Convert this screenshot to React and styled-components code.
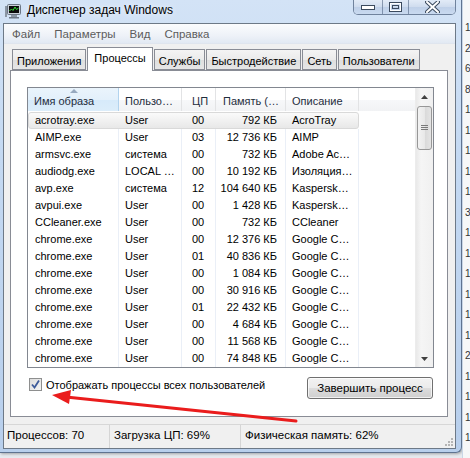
import React from "react";
import styled, { createGlobalStyle } from "styled-components";

const GlobalStyle = createGlobalStyle`
  html, body { margin: 0; padding: 0; }
  body {
    width: 470px;
    height: 458px;
    overflow: hidden;
    background: #e6eaef;
    font-family: "Liberation Sans", Arial, sans-serif;
    font-size: 11px;
    color: #000;
  }
`;

const Screen = styled.div`
  position: relative;
  width: 470px;
  height: 458px;
  display: flex;
  align-items: flex-start;
  overflow: hidden;
`;

const Window = styled.div`
  width: 461px;
  height: 452px;
  flex: none;
  display: flex;
  flex-direction: column;
  background: linear-gradient(180deg, #d3e3f6 0%, #c4d9f2 35%, #b8cfec 100%);
  border-right: 1px solid #5f7390;
  border-bottom: 1px solid #5f7390;
  border-bottom-right-radius: 6px;
  box-shadow: 1px 1px 3px rgba(0, 0, 0, 0.3);
`;

const TitleBar = styled.div`
  height: 23px;
  flex: none;
  display: flex;
  align-items: flex-start;
`;

const TitleIcon = styled.svg`
  margin: 4px 0 0 5px;
  flex: none;
`;

const TitleText = styled.div`
  margin-left: 6px;
  line-height: 21px;
  font-size: 12px;
  color: #000;
  text-shadow: 0 0 6px rgba(255, 255, 255, 0.9);
`;

const WinButtons = styled.div`
  margin-left: auto;
  margin-right: 5px;
  height: 14px;
  display: flex;
  border: 1px solid rgba(70, 90, 120, 0.7);
  border-top: none;
  border-radius: 0 0 5px 5px;
  overflow: hidden;
  box-shadow: inset 0 0 0 1px rgba(255, 255, 255, 0.5);
`;

const WinButton = styled.div`
  width: ${(p) => p.$w}px;
  display: flex;
  align-items: center;
  justify-content: center;
  background: linear-gradient(180deg, #e2ebf7 0%, #cfdcee 50%, #bfd0e8 51%, #c9daf0 100%);
  & + & {
    border-left: 1px solid rgba(70, 90, 120, 0.55);
  }
`;

const Client = styled.div`
  flex: 1;
  margin: 0 5px 3px 3px;
  border: 1px solid #6d7987;
  background: #f0f0f0;
  display: flex;
  flex-direction: column;
  min-height: 0;
`;

const MenuBar = styled.div`
  height: 20px;
  flex: none;
  display: flex;
  align-items: center;
  padding-left: 8px;
  gap: 14px;
  background: linear-gradient(180deg, #fbfcfe 0%, #eef2f8 60%, #e2e9f3 100%);
  border-bottom: 1px solid #dfe5ee;
  box-sizing: border-box;
`;

const MenuItem = styled.span`
  color: #5c5c5c;
  font-size: 11.5px;
`;

const Body = styled.div`
  flex: 1;
  display: flex;
  flex-direction: column;
  padding: 3px 7px 7px 6px;
  min-height: 0;
`;

const TabRow = styled.div`
  height: 23px;
  flex: none;
  display: flex;
  align-items: flex-end;
  padding-left: 2px;
  position: relative;
  z-index: 1;
`;

const Tab = styled.div`
  height: ${(p) => (p.$active ? 24 : 21)}px;
  margin-bottom: ${(p) => (p.$active ? -1 : 0)}px;
  box-sizing: border-box;
  padding: ${(p) => (p.$active ? "3px 6px 0" : "4px 4px 0")};
  margin-right: 1px;
  border: 1px solid #898c95;
  border-bottom: ${(p) => (p.$active ? "none" : "1px solid #898c95")};
  background: ${(p) =>
    p.$active ? "#fff" : "linear-gradient(180deg, #f4f4f4 0%, #ebebeb 50%, #dedede 51%, #e6e6e6 100%)"};
  white-space: nowrap;
  line-height: 14px;
`;

const Panel = styled.div`
  flex: 1;
  border: 1px solid #898c95;
  background: #fff;
  padding: 16px 13px 0 16px;
  display: flex;
  flex-direction: column;
  min-height: 0;
`;

const ListView = styled.div`
  height: 279px;
  flex: none;
  border: 1px solid #828790;
  display: flex;
  overflow: hidden;
`;

const ListMain = styled.div`
  flex: 1;
  display: flex;
  flex-direction: column;
  overflow: hidden;
`;

const COLS = "91px 63px 34px 70px 73px 1fr";

const HeaderRow = styled.div`
  height: 23px;
  flex: none;
  display: grid;
  grid-template-columns: ${COLS};
  background: linear-gradient(180deg, #ffffff 0%, #ffffff 50%, #f7f8fa 51%, #f1f2f4 100%);
`;

const HeaderCell = styled.div`
  position: relative;
  box-sizing: border-box;
  padding: 6px 0 0 ${(p) => p.$pl || 6}px;
  color: #1f2d3d;
  line-height: 14px;
  white-space: nowrap;
  overflow: hidden;
  border-right: 1px solid ${(p) => (p.$sorted ? "#b2d3ee" : "#e2e3e5")};
  background: ${(p) =>
    p.$sorted ? "linear-gradient(180deg, #eaf4fc 0%, #e3f0fb 50%, #d6eafa 51%, #dcedfa 100%)" : "transparent"};
  &::before {
    content: "";
    display: ${(p) => (p.$sorted ? "block" : "none")};
    position: absolute;
    top: 1px;
    left: 42px;
    border-left: 4px solid transparent;
    border-right: 4px solid transparent;
    border-bottom: 4px solid #97a9bf;
  }
  &:last-child {
    border-right: none;
  }
`;

const Rows = styled.div`
  flex: 1;
  padding-top: 1px;
`;

const Row = styled.div`
  height: 17px;
  display: grid;
  grid-template-columns: ${COLS};
  position: relative;
  &::after {
    content: "";
    display: ${(p) => (p.$selected ? "block" : "none")};
    position: absolute;
    left: 0;
    top: 0;
    width: 331px;
    height: 17px;
    box-sizing: border-box;
    border: 1px solid #d9d9d9;
    border-radius: 3px;
    background: linear-gradient(180deg, #fafafa 0%, #e8e8e8 100%);
    z-index: 0;
  }
`;

const Cell = styled.div`
  position: relative;
  z-index: 1;
  box-sizing: border-box;
  line-height: 17px;
  white-space: nowrap;
  overflow: hidden;
  padding: 0 ${(p) => (p.$right ? "8px" : "0")} 0 ${(p) => (p.$right ? "0" : `${p.$pl || 7}px`)};
  text-align: ${(p) => (p.$right ? "right" : "left")};
  border-right: 1px solid ${(p) => (p.$selected ? "transparent" : "#eaeff7")};
  &:last-child {
    border-right: none;
  }
`;

const ScrollBar = styled.div`
  width: 17px;
  flex: none;
  display: flex;
  flex-direction: column;
  background: linear-gradient(90deg, #e9e9e9 0%, #f5f5f5 30%, #f0f0f0 100%);
  border-left: 1px solid #ececec;
`;

const ScrollArrow = styled.div`
  height: 17px;
  flex: none;
  display: flex;
  align-items: center;
  justify-content: center;
`;

const ScrollTrack = styled.div`
  flex: 1;
  padding: 1px 0;
`;

const Thumb = styled.div`
  height: 44px;
  margin: 0 1px;
  box-sizing: border-box;
  border: 1px solid #979797;
  border-radius: 3px;
  background: linear-gradient(90deg, #f3f3f3 0%, #e8e8e8 50%, #d9d9d9 51%, #e4e4e4 100%);
  display: flex;
  align-items: center;
  justify-content: center;
`;

const BottomRow = styled.div`
  margin-top: 9px;
  display: flex;
  align-items: center;
  justify-content: space-between;
  padding: 0 1px 0 2px;
`;

const CheckLabel = styled.label`
  display: flex;
  align-items: center;
  gap: 4px;
  margin-top: -7px;
  line-height: 14px;
`;

const CheckBox = styled.span`
  width: 13px;
  height: 13px;
  box-sizing: border-box;
  border: 1px solid #8e8f8f;
  background: linear-gradient(135deg, #dcdcdc 0%, #f4f4f4 100%);
  display: flex;
  align-items: center;
  justify-content: center;
`;

const Button = styled.div`
  width: 126px;
  height: 22px;
  box-sizing: border-box;
  border: 1px solid #707070;
  border-radius: 3px;
  background: linear-gradient(180deg, #f2f2f2 0%, #ebebeb 50%, #dddddd 51%, #cfcfcf 100%);
  box-shadow: inset 0 0 0 1px rgba(255, 255, 255, 0.7);
  display: flex;
  align-items: center;
  justify-content: center;
  line-height: 14px;
  font-size: 11.5px;
`;

const StatusBar = styled.div`
  height: 24px;
  flex: none;
  box-sizing: border-box;
  border-top: 1px solid #d7d7d7;
  display: flex;
  position: relative;
`;

const StatusCell = styled.div`
  width: ${(p) => (p.$w ? `${p.$w}px` : "auto")};
  flex: ${(p) => (p.$w ? "none" : 1)};
  box-sizing: border-box;
  padding-left: ${(p) => p.$pl}px;
  line-height: 21px;
  font-size: 11.5px;
  border-right: ${(p) => (p.$w ? "1px solid #d5d5d5" : "none")};
  white-space: nowrap;
`;

const Grip = styled.svg`
  position: absolute;
  right: 2px;
  bottom: 2px;
`;

const DesktopStrip = styled.div`
  flex: 1;
  height: 458px;
  display: flex;
  flex-direction: column;
  padding: 18px 0 0 2px;
  background: #f6f7f8;
  border-left: 1px solid #c9d6e6;
  color: #333;
  font-size: 10px;
  line-height: 20.5px;
  overflow: hidden;
`;

const Overlay = styled.svg`
  position: absolute;
  left: 0;
  top: 0;
  pointer-events: none;
`;

const rows = [
  ["acrotray.exe", "User", "00", "792 КБ", "AcroTray"],
  ["AIMP.exe", "User", "03", "12 736 КБ", "AIMP"],
  ["armsvc.exe", "система", "00", "732 КБ", "Adobe Ac…"],
  ["audiodg.exe", "LOCAL …", "00", "10 192 КБ", "Изоляция…"],
  ["avp.exe", "система", "12", "104 640 КБ", "Kaspersk…"],
  ["avpui.exe", "User", "00", "1 428 КБ", "Kaspersk…"],
  ["CCleaner.exe", "User", "00", "732 КБ", "CCleaner"],
  ["chrome.exe", "User", "00", "12 376 КБ", "Google C…"],
  ["chrome.exe", "User", "01", "40 836 КБ", "Google C…"],
  ["chrome.exe", "User", "00", "1 084 КБ", "Google C…"],
  ["chrome.exe", "User", "00", "30 916 КБ", "Google C…"],
  ["chrome.exe", "User", "01", "22 432 КБ", "Google C…"],
  ["chrome.exe", "User", "00", "4 684 КБ", "Google C…"],
  ["chrome.exe", "User", "00", "11 568 КБ", "Google C…"],
  ["chrome.exe", "User", "00", "74 848 КБ", "Google C…"],
];

const tabs = ["Приложения", "Процессы", "Службы", "Быстродействие", "Сеть", "Пользователи"];
const menus = ["Файл", "Параметры", "Вид", "Справка"];
const desktopDigits = ["1", "2", "6", "8", "1", "1", "1", "1", "1", "3", "1", "1", "1", "1", "1", "1", "2", "1", "1", "1", "1"];

const AppIcon = () => (
  <TitleIcon width="16" height="15" viewBox="0 0 16 15">
    <rect x="0" y="2" width="2" height="11" fill="#8a96a4" />
    <rect x="2.5" y="0.5" width="13" height="10" rx="1" fill="#c9d1da" stroke="#6b7684" />
    <rect x="4" y="2" width="10" height="7" fill="#0c0c0c" />
    <polyline points="4.5,7 6.5,5 8,6.5 10,3 11.5,5.5 13.5,4" fill="none" stroke="#38e038" strokeWidth="1" />
    <rect x="6" y="11" width="6" height="2" fill="#8a96a4" />
    <rect x="4" y="13" width="10" height="1.5" fill="#6b7684" />
  </TitleIcon>
);

export default function App() {
  return (
    <>
      <GlobalStyle />
      <Screen>
        <Window>
          <TitleBar>
            <AppIcon />
            <TitleText>Диспетчер задач Windows</TitleText>
            <WinButtons>
              <WinButton $w={28}>
                <svg width="14" height="5" viewBox="0 0 14 5">
                  <rect x="0.5" y="0.5" width="13" height="4" fill="#fff" stroke="#3b4a5e" />
                </svg>
              </WinButton>
              <WinButton $w={25}>
                <svg width="13" height="10" viewBox="0 0 13 10">
                  <rect x="0.5" y="0.5" width="12" height="9" fill="none" stroke="#3b4a5e" />
                  <rect x="1.5" y="1.5" width="10" height="7" fill="none" stroke="#fff" />
                  <rect x="3.5" y="3.5" width="6" height="3" fill="none" stroke="#3b4a5e" />
                </svg>
              </WinButton>
              <WinButton $w={46}>
                <svg width="15" height="12" viewBox="0 0 15 12">
                  <path d="M2 1 L13 11 M13 1 L2 11" stroke="#3b4a5e" strokeWidth="4" strokeLinecap="round" />
                  <path d="M2 1 L13 11 M13 1 L2 11" stroke="#fff" strokeWidth="2" strokeLinecap="round" />
                </svg>
              </WinButton>
            </WinButtons>
          </TitleBar>

          <Client>
            <MenuBar>
              {menus.map((m) => (
                <MenuItem key={m}>{m}</MenuItem>
              ))}
            </MenuBar>

            <Body>
              <TabRow>
                {tabs.map((t) => (
                  <Tab key={t} $active={t === "Процессы"}>
                    {t}
                  </Tab>
                ))}
              </TabRow>

              <Panel>
                <ListView>
                  <ListMain>
                    <HeaderRow>
                      <HeaderCell $sorted>Имя образа</HeaderCell>
                      <HeaderCell>Пользо…</HeaderCell>
                      <HeaderCell $pl={10}>ЦП</HeaderCell>
                      <HeaderCell $pl={7}>Память (…</HeaderCell>
                      <HeaderCell>Описание</HeaderCell>
                      <HeaderCell />
                    </HeaderRow>
                    <Rows>
                      {rows.map((r, i) => {
                        const sel = i === 0;
                        return (
                          <Row key={i} $selected={sel}>
                            <Cell $selected={sel}>{r[0]}</Cell>
                            <Cell $selected={sel} $pl={6}>
                              {r[1]}
                            </Cell>
                            <Cell $selected={sel} $pl={10}>
                              {r[2]}
                            </Cell>
                            <Cell $selected={sel} $right>
                              {r[3]}
                            </Cell>
                            <Cell $selected={sel} $pl={6}>
                              {r[4]}
                            </Cell>
                            <Cell />
                          </Row>
                        );
                      })}
                    </Rows>
                  </ListMain>
                  <ScrollBar>
                    <ScrollArrow>
                      <svg width="7" height="4" viewBox="0 0 7 4">
                        <path d="M0 4 L3.5 0 L7 4 Z" fill="#404040" />
                      </svg>
                    </ScrollArrow>
                    <ScrollTrack>
                      <Thumb>
                        <svg width="7" height="6" viewBox="0 0 7 6">
                          <path d="M0 0.5 H7 M0 2.5 H7 M0 4.5 H7" stroke="#7a7a7a" strokeWidth="1" />
                        </svg>
                      </Thumb>
                    </ScrollTrack>
                    <ScrollArrow>
                      <svg width="7" height="4" viewBox="0 0 7 4">
                        <path d="M0 0 L3.5 4 L7 0 Z" fill="#404040" />
                      </svg>
                    </ScrollArrow>
                  </ScrollBar>
                </ListView>

                <BottomRow>
                  <CheckLabel>
                    <CheckBox>
                      <svg width="9" height="9" viewBox="0 0 9 9">
                        <path d="M1 4.5 L3.5 7.5 L8 0.5" fill="none" stroke="#3c5a9a" strokeWidth="1.8" />
                      </svg>
                    </CheckBox>
                    Отображать процессы всех пользователей
                  </CheckLabel>
                  <Button>Завершить процесс</Button>
                </BottomRow>
              </Panel>
            </Body>

            <StatusBar>
              <StatusCell $w={106} $pl={3}>
                Процессов: 70
              </StatusCell>
              <StatusCell $w={131} $pl={4}>
                Загрузка ЦП: 69%
              </StatusCell>
              <StatusCell $pl={4}>Физическая память: 62%</StatusCell>
              <Grip width="10" height="10" viewBox="0 0 10 10">
                {[
                  [8, 2],
                  [5, 5],
                  [8, 5],
                  [2, 8],
                  [5, 8],
                  [8, 8],
                ].map(([x, y], i) => (
                  <rect key={i} x={x} y={y} width="2" height="2" fill="#b5b5b5" />
                ))}
              </Grip>
            </StatusBar>
          </Client>
        </Window>

        <DesktopStrip>
          {desktopDigits.map((d, i) => (
            <span key={i}>{d}</span>
          ))}
        </DesktopStrip>

        <Overlay width="470" height="458" viewBox="0 0 470 458">
          <path d="M296 421 L66 397" stroke="#ea1c1c" strokeWidth="3" strokeLinecap="round" />
          <polygon points="52,395 71,390 69,404" fill="#ea1c1c" />
        </Overlay>
      </Screen>
    </>
  );
}
